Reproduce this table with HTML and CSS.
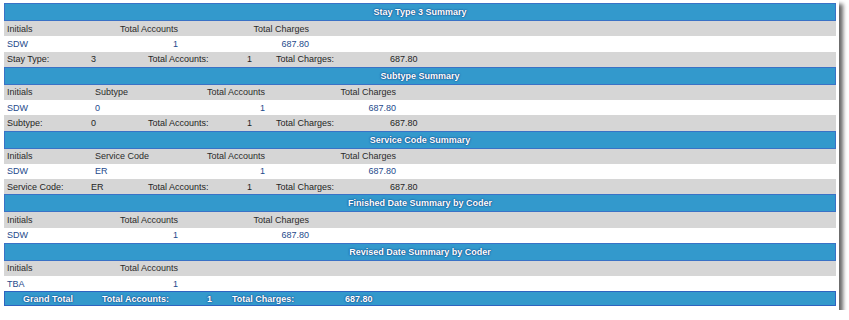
FILE: index.html
```html
<!DOCTYPE html>
<html>
<head>
<meta charset="utf-8">
<title>Stay Type Summary</title>
<link rel="stylesheet" href="styles.css">
</head>
<body>
<div class="report">
  <section class="group">
    <div class="group-title">Stay Type 3 Summary</div>
    <div class="row head cols3"><span>Initials</span><span class="num">Total Accounts</span><span class="num">Total Charges</span></div>
    <div class="row data cols3"><span>SDW</span><span class="num">1</span><span class="num">687.80</span></div>
    <div class="row total sum"><span>Stay Type:</span><span>3</span><span>Total Accounts:</span><span>1</span><span>Total Charges:</span><span>687.80</span></div>
  </section>
  <section class="group">
    <div class="group-title">Subtype Summary</div>
    <div class="row head cols4"><span>Initials</span><span>Subtype</span><span class="num">Total Accounts</span><span class="num">Total Charges</span></div>
    <div class="row data cols4"><span>SDW</span><span>0</span><span class="num">1</span><span class="num">687.80</span></div>
    <div class="row total sum"><span>Subtype:</span><span>0</span><span>Total Accounts:</span><span>1</span><span>Total Charges:</span><span>687.80</span></div>
  </section>
  <section class="group">
    <div class="group-title">Service Code Summary</div>
    <div class="row head cols4"><span>Initials</span><span>Service Code</span><span class="num">Total Accounts</span><span class="num">Total Charges</span></div>
    <div class="row data cols4"><span>SDW</span><span>ER</span><span class="num">1</span><span class="num">687.80</span></div>
    <div class="row total sum"><span>Service Code:</span><span>ER</span><span>Total Accounts:</span><span>1</span><span>Total Charges:</span><span>687.80</span></div>
  </section>
  <section class="group">
    <div class="group-title">Finished Date Summary by Coder</div>
    <div class="row head cols3"><span>Initials</span><span class="num">Total Accounts</span><span class="num">Total Charges</span></div>
    <div class="row data cols3"><span>SDW</span><span class="num">1</span><span class="num">687.80</span></div>
  </section>
  <section class="group">
    <div class="group-title">Revised Date Summary by Coder</div>
    <div class="row head cols3"><span>Initials</span><span class="num">Total Accounts</span><span></span></div>
    <div class="row data cols3"><span>TBA</span><span class="num">1</span><span></span></div>
  </section>
  <div class="grand">
    <span class="grand-label">Grand Total</span><span>Total Accounts:</span><span>1</span><span>Total Charges:</span><span>687.80</span>
  </div>
</div>
</body>
</html>
```
FILE: styles.css
```css
html, body {
  margin: 0;
  padding: 0;
  background: #ffffff;
}

body {
  font-family: "Liberation Sans", Arial, sans-serif;
  font-size: 9px;
}

.report {
  width: 832px;
  padding: 3px 3px 4px 4px;
  background: #ffffff;
  box-shadow: 4px 4px 4px rgba(0, 0, 0, 0.6);
}

.group-title {
  height: 18px;
  box-sizing: border-box;
  border: 1px solid #3a72c6;
  background: #3399cc;
  color: #ffffff;
  font-weight: bold;
  text-align: center;
  line-height: 16px;
  text-shadow: 0 0 1px #0f3f80, 0 0 2px #0f3f80;
}

.row {
  display: grid;
  height: 15.25px;
  align-items: center;
}

.row > span {
  padding: 0 3px;
  white-space: nowrap;
}

.row .num {
  text-align: right;
}

.head {
  background: #d6d6d6;
  color: #2b2b2b;
}

.data {
  background: #ffffff;
  color: #1e4a8c;
}

.total {
  background: #d6d6d6;
  color: #1f1f1f;
}

.cols3 {
  grid-template-columns: 106px 71px 131px 1fr;
}

.cols4 {
  grid-template-columns: 88px 88px 88px 131px 1fr;
}

.sum {
  grid-template-columns: 84px 57px 99px 29px 114px 1fr;
}

.grand {
  display: grid;
  grid-template-columns: 94px 105px 25px 113px 1fr;
  align-items: center;
  height: 15px;
  box-sizing: border-box;
  border: 1px solid #2f63c0;
  background: #3399cc;
  color: #ffffff;
  font-weight: bold;
  text-shadow: 0 0 1px #0f3f80, 0 0 2px #0f3f80;
}

.grand > span {
  padding-left: 3px;
  white-space: nowrap;
}

.grand > .grand-label {
  padding-left: 0;
  padding-right: 8px;
  text-align: center;
}
```
